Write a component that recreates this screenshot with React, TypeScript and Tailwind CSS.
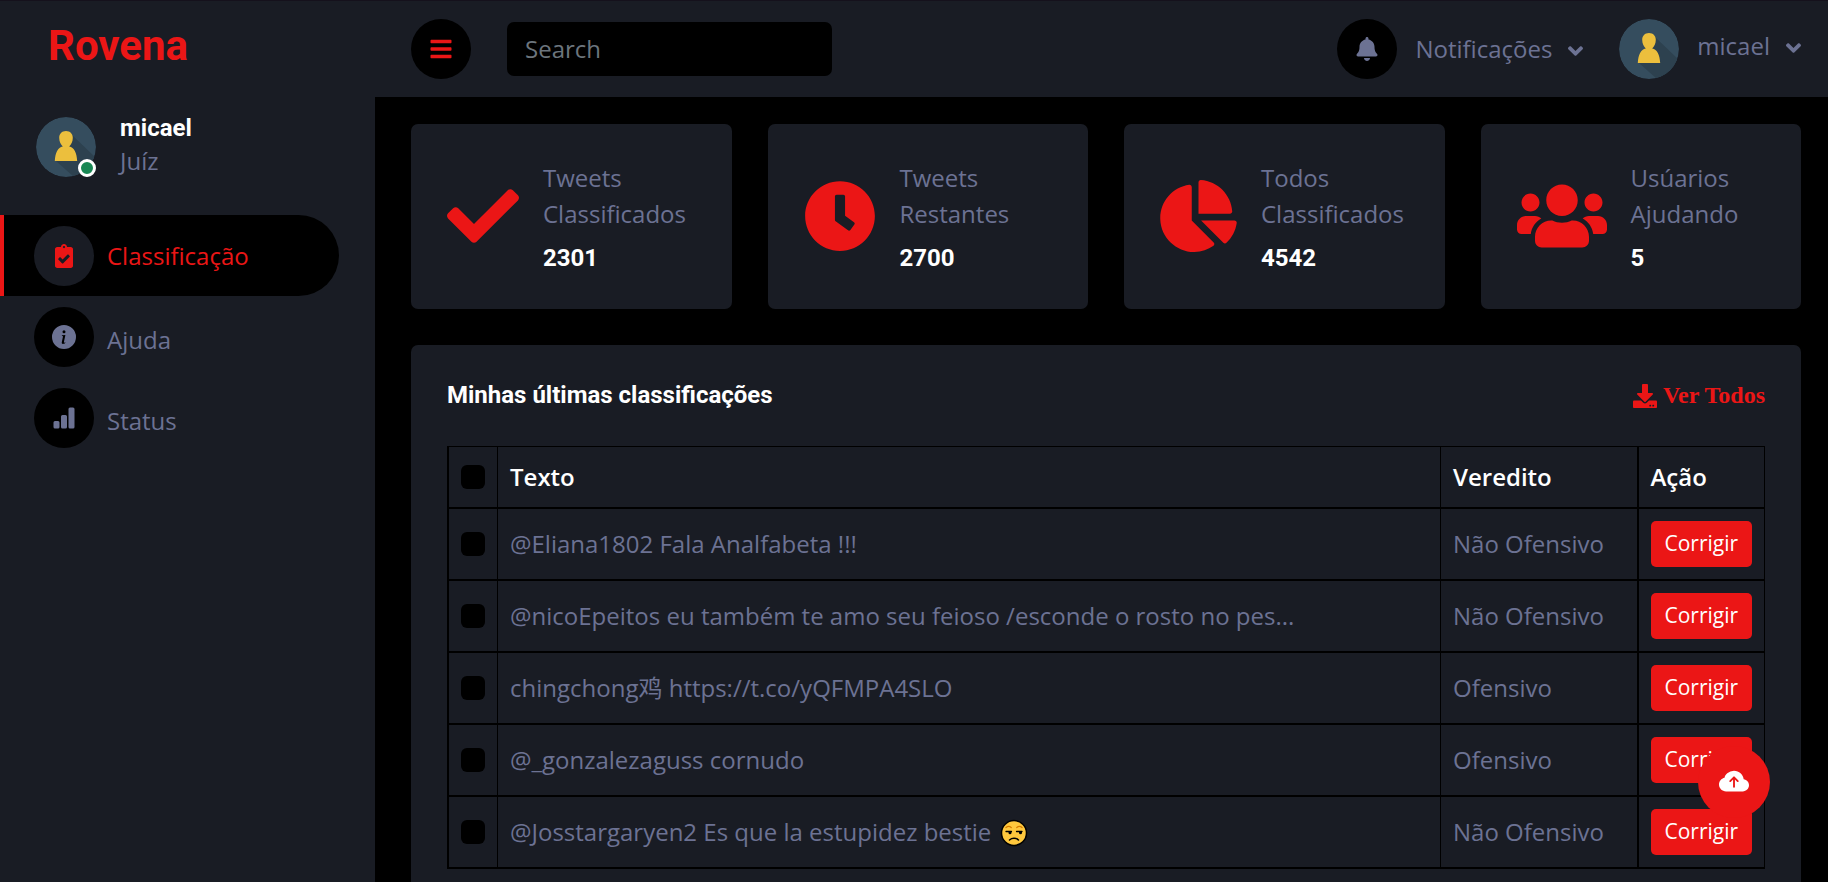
import React from "react";
import {
  FaAngleDown,
  FaBars,
  FaBell,
  FaChartPie,
  FaCheck,
  FaClipboardCheck,
  FaDownload,
  FaUsers,
} from "react-icons/fa";
import { BsBarChartFill, BsCloudArrowUpFill, BsInfoCircleFill } from "react-icons/bs";

function Avatar() {
  return (
    <svg viewBox="0 0 60 60" className="size-[60px] shrink-0 rounded-full" role="img" aria-label="micael">
      <circle cx="30" cy="30" r="30" fill="#354d5e" />
      <path d="M36 18 L60 41 V60 H38 L20 44 L30 30Z" fill="#2d414f" />
      <path
        d="M30 14c4.200 0 6.800 2.800 6.800 6.800 0 3.800-1.500 6.800-3.600 8.700 5 1 7.500 6 8 14.500H18.800c.5-8.500 3-13.500 8-14.500-2.100-1.900-3.600-4.900-3.600-8.700C23.200 16.800 25.800 14 30 14Z"
        fill="#ecbf3d"
      />
    </svg>
  );
}

function ClockIcon() {
  return (
    <svg viewBox="0 0 512 512" fill="currentColor" className="h-[72px] w-[72px]" aria-hidden="true">
      <path d="M256 8C119 8 8 119 8 256s111 248 248 248 248-111 248-248S393 8 256 8zm57.100 350.100L224.900 294c-3.100-2.300-4.900-5.900-4.900-9.700V116c0-6.600 5.400-12 12-12h48c6.600 0 12 5.400 12 12v137.700l63.500 46.200c5.400 3.900 6.500 11.400 2.600 16.800l-28.200 38.800c-3.900 5.300-11.400 6.500-16.800 2.600z" />
    </svg>
  );
}

function UnamusedFace() {
  return (
    <svg viewBox="0 0 28 28" className="ml-0.5 inline-block size-7 align-[-6px]" role="img" aria-label="😒">
      <circle cx="14" cy="14" r="12.500" fill="#ffc83d" stroke="#000" strokeWidth="1.500" />
      <g fill="none" strokeLinecap="round">
        <path d="M6 8.500c1.500-1.200 3.800-1.200 5.200 0M16.800 8.500c1.500-1.200 3.800-1.200 5.200 0" stroke="#d67d00" strokeWidth="1.300" />
        <path d="M6 12.500h5.500M16.500 12.500H22" stroke="#000" strokeWidth="1.300" />
        <path d="M9.500 21c2.500-2.200 6.500-2.200 9 0" stroke="#000" strokeWidth="1.500" />
      </g>
      <path d="M8.500 12.500h3v1.200a1.500 1.500 0 0 1-3 0zM19 12.500h3v1.200a1.500 1.500 0 0 1-3 0z" />
    </svg>
  );
}

const navItems = [
  { label: "Classificação", Icon: FaClipboardCheck, active: true },
  { label: "Ajuda", Icon: BsInfoCircleFill, active: false },
  { label: "Status", Icon: BsBarChartFill, active: false },
];

const stats = [
  { label: "Tweets Classificados", value: "2301", icon: <FaCheck className="h-[72px] w-[72px]" /> },
  { label: "Tweets Restantes", value: "2700", icon: <ClockIcon /> },
  { label: "Todos Classificados", value: "4542", icon: <FaChartPie className="h-[72px] w-[77px]" /> },
  { label: "Usúarios Ajudando", value: "5", icon: <FaUsers className="h-[72px] w-[90px]" /> },
];

const rows: { id: number; text: React.ReactNode; verdict: string }[] = [
  { id: 1, text: "@Eliana1802 Fala Analfabeta !!!", verdict: "Não Ofensivo" },
  { id: 2, text: "@nicoEpeitos eu também te amo seu feioso /esconde o rosto no pes...", verdict: "Não Ofensivo" },
  { id: 3, text: "chingchong鸡 https://t.co/yQFMPA4SLO", verdict: "Ofensivo" },
  { id: 4, text: "@_gonzalezaguss cornudo", verdict: "Ofensivo" },
  {
    id: 5,
    text: (
      <>
        @Josstargaryen2 Es que la estupidez bestie <UnamusedFace />
      </>
    ),
    verdict: "Não Ofensivo",
  },
];

function RowCheck({ label }: { label: string }) {
  return (
    <input
      type="checkbox"
      aria-label={label}
      className="block size-6 appearance-none rounded-md bg-black checked:bg-[#eb1616]"
    />
  );
}

function Sidebar() {
  return (
    <aside className="w-[375px] shrink-0 bg-[#191c24] pr-9">
      <a href="#" className="block pt-5 pl-12 font-['Roboto',sans-serif] text-[42px] leading-[50px] font-bold text-[#eb1616]">
        Rovena
      </a>
      <div className="mt-[43px] flex items-center pl-9">
        <div className="relative">
          <Avatar />
          <span className="absolute right-0 bottom-0 size-[18px] rounded-full border-3 border-white bg-[#198754]" />
        </div>
        <div className="ml-6">
          <h6 className="font-['Roboto',sans-serif] leading-[29px] font-bold text-white">micael</h6>
          <span className="block">Juíz</span>
        </div>
      </div>
      <nav className="mt-9">
        {navItems.map(({ label, Icon, active }) => (
          <a
            key={label}
            href="#"
            className={
              active
                ? "flex h-[81px] items-center rounded-r-full border-l-4 border-[#eb1616] bg-black pl-[30px] text-[#eb1616]"
                : "flex h-[81px] items-center border-l-4 border-transparent pl-[30px]"
            }
          >
            <span
              className={
                active
                  ? "flex size-[60px] items-center justify-center rounded-full bg-[#191c24]"
                  : "flex size-[60px] items-center justify-center rounded-full bg-black"
              }
            >
              <Icon className="size-6" />
            </span>
            <span className={active ? "ml-[13px]" : "ml-[13px] pt-1.5"}>{label}</span>
          </a>
        ))}
      </nav>
    </aside>
  );
}

function Topbar() {
  return (
    <header className="flex h-24 items-center bg-[#191c24] pr-[27px] pl-9">
      <button type="button" aria-label="Menu" className="flex size-[60px] items-center justify-center rounded-full bg-black text-[#eb1616]">
        <FaBars className="size-6" />
      </button>
      <input
        type="search"
        aria-label="Search"
        placeholder="Search"
        className="ml-9 h-[54px] w-[325px] rounded-[7px] bg-black px-[18px] pb-0.5 outline-none placeholder:text-[#6c757d]"
      />
      <div className="ml-auto flex items-center gap-9">
        <button type="button" className="flex items-center">
          <span className="flex size-[60px] items-center justify-center rounded-full bg-black">
            <FaBell className="size-6" />
          </span>
          <span className="ml-[18px]">Notificações</span>
          <FaAngleDown className="mt-1 ml-4 h-6 w-[15px]" />
        </button>
        <button type="button" className="flex items-center">
          <Avatar />
          <span className="ml-[18px] flex items-center pb-1.5">
            micael
            <FaAngleDown className="mt-1 ml-4 h-6 w-[15px]" />
          </span>
        </button>
      </div>
    </header>
  );
}

export default function App() {
  return (
    <div className="flex min-h-screen border-t border-[#15111c] bg-black font-['Open_Sans','Noto_Sans_CJK_SC',sans-serif] text-2xl leading-9 text-[#6c7293]">
      <Sidebar />
      <div className="min-w-0 flex-1">
        <Topbar />
        <main className="pt-[27px] pr-[27px] pl-9">
          <section className="grid grid-cols-4 gap-9">
            {stats.map(({ label, value, icon }) => (
              <div key={label} className="flex items-center rounded-[7px] bg-[#191c24] p-9">
                <span className="shrink-0 pb-0.5 text-[#eb1616]">{icon}</span>
                <div className="ml-6">
                  <p className="mb-3">{label}</p>
                  <h6 className="font-['Roboto',sans-serif] leading-[29px] font-bold text-white">{value}</h6>
                </div>
              </div>
            ))}
          </section>
          <section className="mt-9 rounded-[7px] bg-[#191c24] p-9">
            <div className="mb-9 flex items-center justify-between leading-[29px]">
              <h6 className="font-['Roboto',sans-serif] font-bold text-white">Minhas últimas classificações</h6>
              <a href="#" className="flex items-center gap-1.5 font-['Liberation_Serif',serif] font-bold text-[#eb1616]">
                <FaDownload className="size-6" />
                Ver Todos
              </a>
            </div>
            <table className="w-full border-collapse border border-black text-left">
              <thead>
                <tr className="border-b-2 border-black text-white">
                  <th className="w-[49px] border-r border-l-2 border-black p-3">
                    <RowCheck label="Selecionar todos" />
                  </th>
                  <th className="p-3 font-semibold">Texto</th>
                  <th className="w-[197px] border-x border-r-2 border-black p-3 font-semibold">Veredito</th>
                  <th className="w-[127px] p-3 font-semibold">Ação</th>
                </tr>
              </thead>
              <tbody>
                {rows.map(({ id, text, verdict }) => (
                  <tr key={id} className="border-b-2 border-black">
                    <td className="border-r border-l-2 border-black p-3">
                      <RowCheck label={`Selecionar linha ${id}`} />
                    </td>
                    <td className="p-3">{text}</td>
                    <td className="border-x border-r-2 border-black p-3">{verdict}</td>
                    <td className="p-3">
                      <a href="#" className="block h-[46px] rounded-[5px] bg-[#eb1616] text-center text-[21px] leading-[45px] text-white">
                        Corrigir
                      </a>
                    </td>
                  </tr>
                ))}
              </tbody>
            </table>
          </section>
        </main>
      </div>
      <a
        href="#"
        aria-label="Voltar ao topo"
        className="fixed right-[58px] bottom-16 flex size-[72px] items-center justify-center rounded-full bg-[#eb1616] text-white"
      >
        <BsCloudArrowUpFill className="size-[30px]" />
      </a>
    </div>
  );
}
